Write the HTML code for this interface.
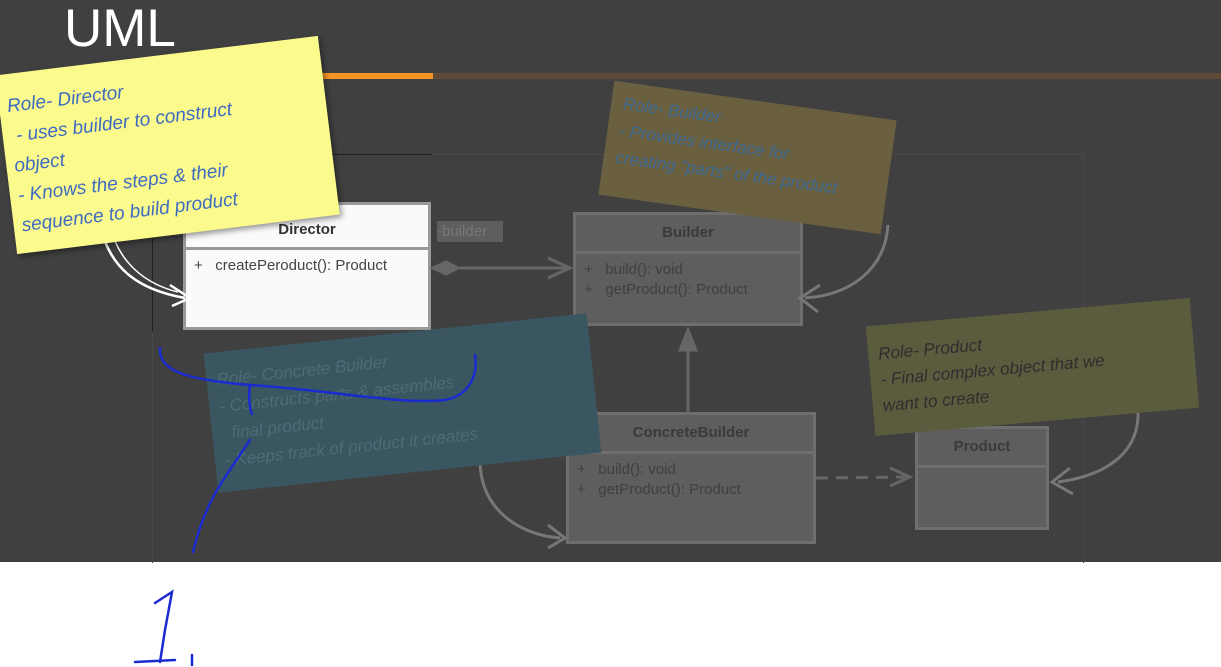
<!DOCTYPE html>
<html><head><meta charset="utf-8"><style>
body{margin:0;width:1221px;height:667px;overflow:hidden;background:#fff;position:relative;font-family:"Liberation Sans",sans-serif}
.a{position:absolute}
.hand{font-family:"Liberation Sans",sans-serif;font-style:italic;font-size:17px;line-height:27px}
.box{position:absolute;border:3px solid #6e6e6e;background:#5e5e5e;box-sizing:border-box}
.box .h{height:36px;border-bottom:3px solid #6e6e6e;text-align:center;font-weight:bold;font-size:15px;line-height:36px;color:#3a3a3a}
.box .m{padding:6px 0 0 8px;font-size:15px;line-height:20px;color:#404040}
</style></head><body>
<div class="a" style="left:0;top:0;width:1221px;height:562px;background:#404040"></div>
<div class="a" style="left:64px;top:0px;font-size:53px;color:#fff;line-height:58px">UML</div>
<div class="a" style="left:300px;top:73px;width:133px;height:6px;background:#f39424"></div>
<div class="a" style="left:433px;top:73px;width:788px;height:6px;background:#5e4a36"></div>
<div class="a" style="left:152px;top:154px;width:930px;height:408px;border:1px solid #4a4a4a;border-bottom:none"></div>
<div class="a" style="left:152px;top:154px;width:280px;height:1px;background:#222"></div>
<div class="a" style="left:152px;top:154px;width:1px;height:178px;background:#222"></div>

<div class="box" style="left:573px;top:212px;width:230px;height:114px"><div class="h">Builder</div><div class="m">+&nbsp;&nbsp;&nbsp;build(): void<br>+&nbsp;&nbsp;&nbsp;getProduct(): Product</div></div>
<div class="box" style="left:566px;top:412px;width:250px;height:132px"><div class="h">ConcreteBuilder</div><div class="m">+&nbsp;&nbsp;&nbsp;build(): void<br>+&nbsp;&nbsp;&nbsp;getProduct(): Product</div></div>
<div class="box" style="left:915px;top:426px;width:134px;height:104px"><div class="h">Product</div></div>
<div class="box" style="left:183px;top:202px;width:248px;height:128px;background:#fafafa;border-color:#999"><div class="h" style="border-color:#999;color:#333;height:42px;line-height:50px">Director</div><div class="m" style="color:#444">+&nbsp;&nbsp;&nbsp;createPeroduct(): Product</div></div>
<div class="a" style="left:437px;top:221px;width:66px;height:21px;background:#5e5e5e;color:#777;font-size:15px;line-height:21px">-builder</div>

<svg class="a" style="left:0;top:0" width="1221" height="667">
<g stroke="#666" stroke-width="3" fill="none">
<path d="M460 268 L570 268 M548 258 L570 268 L548 278"/>
<path d="M433 268 L446 262 L458 268 L446 274Z" fill="#666"/>
<path d="M688 412 L688 350"/>
<path d="M688 330 L680 350 L696 350Z" fill="#666"/>
<path d="M816 478 L905 477" stroke-dasharray="12 8"/>
<path d="M890 468 L910 477 L890 486"/>
<path d="M888 225 C885 270 850 295 805 298 M820 285 L800 298 L818 312" stroke="#777"/>
<path d="M1138 410 C1140 450 1110 475 1058 482 M1070 468 L1052 482 L1073 494" stroke="#777"/>
<path d="M480 460 C480 510 520 535 560 538 M548 525 L565 538 L548 548" stroke="#777"/>
<path d="M100 225 C110 270 140 290 185 298 M170 285 L190 298 L172 306" stroke="#fff" stroke-width="2.5"/>
<path d="M110 225 C118 262 145 284 178 292" stroke="#fff" stroke-width="1.5"/>
</g>
</svg>

<div class="a hand" style="left:605px;top:100px;width:285px;height:115px;background:#6a6040;transform:rotate(8deg);color:#3d6890;padding:8px 12px;box-sizing:border-box">Role- Builder<br>- Provides interface for<br>creating "parts" of the product</div>
<div class="a hand" style="left:870px;top:312px;width:325px;height:110px;background:#5b5b3e;transform:rotate(-5deg);color:#2e2e2e;padding:16px 10px;box-sizing:border-box;line-height:26px">Role- Product<br>- Final complex object that we<br>want to create</div>
<div class="a hand" style="left:210px;top:333px;width:385px;height:140px;background:#3a5661;transform:rotate(-6deg);color:#4d6c76;padding:14px 10px;box-sizing:border-box">Role- Concrete Builder<br>- Constructs parts &amp; assembles<br>&nbsp;&nbsp;final product<br>- Keeps track of product it creates</div>
<div class="a hand" style="left:5px;top:55px;width:325px;height:180px;background:#fbfa8c;transform:rotate(-7deg);color:#3f6cc0;padding:18px 8px;box-sizing:border-box;font-size:19px;line-height:30px;box-shadow:2px 3px 6px rgba(0,0,0,.4)">Role- Director<br>&nbsp;- uses builder to construct<br>object<br>- Knows the steps &amp; their<br>sequence to build product</div>

<svg class="a" style="left:0;top:0" width="1221" height="667">
<g stroke="#1a2bd0" stroke-width="2.5" fill="none" stroke-linecap="round">
<path d="M160 348 C158 372 190 380 250 385 C330 390 400 405 445 400 C470 395 478 375 475 355"/>
<path d="M250 385 C248 398 250 410 252 414"/>
<path d="M250 440 C230 470 215 490 207 510 C200 525 196 540 193 552"/>
<path d="M155 603 L172 592 L165 630 L160 662 M135 662 L175 660 M192 655 L192 665"/>
</g>
</svg>
</body></html>
